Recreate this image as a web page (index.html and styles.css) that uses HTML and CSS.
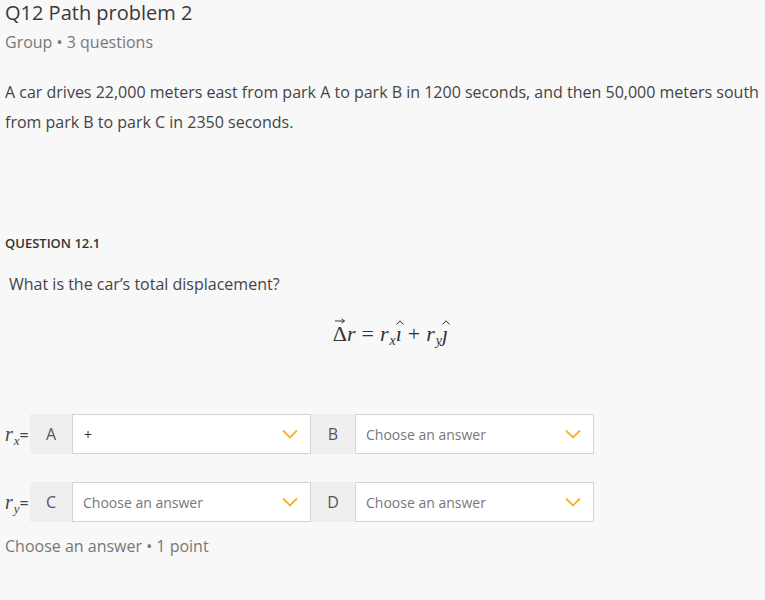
FILE: index.html
```html
<!DOCTYPE html>
<html>
<head>
<meta charset="utf-8">
<link rel="stylesheet" href="styles.css">
</head>
<body>
<div class="page">
  <h1 class="title">Q12 Path problem 2</h1>
  <div class="meta">Group • 3 questions</div>
  <p class="stem">A car drives 22,000 meters east from park A to park B in 1200 seconds, and then 50,000 meters south from park B to park C in 2350 seconds.</p>

  <div class="qlabel">QUESTION 12.1</div>
  <div class="qtext">What is the car’s total displacement?</div>

  <div class="formula">
    <span class="math"><span class="acc"><svg class="arrow" viewBox="0 0 11 6" width="11" height="6"><path d="M0.5 3 H10 M7 0.8 L10 3 L7 5.2" fill="none" stroke="#333" stroke-width="1"/></svg><span class="up">Δ</span></span><i>r</i><span class="op">=</span><i>r</i><sub><i>x</i></sub><span class="acc"><svg class="hat" viewBox="0 0 8 5" width="8" height="5"><path d="M0.5 4.5 L4 0.8 L7.5 4.5" fill="none" stroke="#333" stroke-width="1"/></svg><i>ı</i></span><span class="op">+</span><i>r</i><sub><i>y</i></sub><span class="acc"><svg class="hat" viewBox="0 0 8 5" width="8" height="5"><path d="M0.5 4.5 L4 0.8 L7.5 4.5" fill="none" stroke="#333" stroke-width="1"/></svg><i>ȷ</i></span></span>
  </div>

  <div class="row first">
    <span class="var"><span><i>r</i><sub><i>x</i></sub><span class="eq">=</span></span></span>
    <span class="cell">A</span>
    <div class="select"><span class="val filled">+</span><svg class="chev" viewBox="0 0 16 10" width="16" height="10"><path d="M1 1.5 L8 8.5 L15 1.5" fill="none" stroke="#f7b12a" stroke-width="1.8"/></svg></div>
    <span class="cell">B</span>
    <div class="select"><span class="val">Choose an answer</span><svg class="chev" viewBox="0 0 16 10" width="16" height="10"><path d="M1 1.5 L8 8.5 L15 1.5" fill="none" stroke="#f7b12a" stroke-width="1.8"/></svg></div>
  </div>

  <div class="row">
    <span class="var"><span><i>r</i><sub><i>y</i></sub><span class="eq">=</span></span></span>
    <span class="cell">C</span>
    <div class="select"><span class="val">Choose an answer</span><svg class="chev" viewBox="0 0 16 10" width="16" height="10"><path d="M1 1.5 L8 8.5 L15 1.5" fill="none" stroke="#f7b12a" stroke-width="1.8"/></svg></div>
    <span class="cell">D</span>
    <div class="select"><span class="val">Choose an answer</span><svg class="chev" viewBox="0 0 16 10" width="16" height="10"><path d="M1 1.5 L8 8.5 L15 1.5" fill="none" stroke="#f7b12a" stroke-width="1.8"/></svg></div>
  </div>

  <div class="footer">Choose an answer • 1 point</div>
</div>
</body>
</html>
```
FILE: styles.css
```css
html, body {
  margin: 0;
  padding: 0;
  background: #f8f8f8;
}
body {
  font-family: "Open Sans", "Liberation Sans", sans-serif;
  color: #3f3f3f;
}
.page {
  padding: 0 5px;
}
.title {
  margin: 0;
  font-size: 20px;
  font-weight: 400;
  line-height: 25px;
  color: #3a3a3a;
}
.meta {
  margin-top: 5px;
  font-size: 16px;
  line-height: 24px;
  color: #777;
}
.stem {
  margin: 23px 0 0;
  font-size: 16px;
  line-height: 30px;
  color: #444;
}
.qlabel {
  margin-top: 96px;
  font-size: 13px;
  font-weight: 600;
  line-height: 20px;
  color: #333;
}
.qtext {
  margin-top: 20px;
  padding-left: 4px;
  font-size: 16px;
  line-height: 22px;
  color: #444;
}
.formula {
  margin-top: 26px;
  text-align: center;
  font-family: "Liberation Serif", "DejaVu Serif", serif;
  font-size: 22px;
  line-height: 26px;
  color: #333;
  padding-left: 16px;
}
.formula i {
  font-style: italic;
}
.formula sub {
  font-size: 14px;
  line-height: 0;
  vertical-align: -4px;
  margin-left: 1px;
}
.formula .op {
  margin: 0 6px;
}
.acc {
  position: relative;
  display: inline-block;
}
.acc svg {
  position: absolute;
  left: 50%;
  transform: translateX(-50%);
}
.acc .arrow {
  top: -3px;
}
.acc .hat {
  top: -1px;
  margin-left: 1px;
}
.up {
  font-style: normal;
}
.row {
  display: flex;
  align-items: stretch;
  height: 40px;
  margin-top: 28px;
}
.row.first {
  margin-top: 67px;
}
.var {
  display: flex;
  align-items: center;
  width: 25px;
  font-family: "Liberation Serif", "DejaVu Serif", serif;
  font-size: 20px;
  color: #444;
  white-space: nowrap;
}
.var i {
  font-style: italic;
}
.var sub {
  font-size: 13px;
  line-height: 0;
  vertical-align: -4px;
  margin-left: 1px;
}
.var .eq {
  font-family: "Open Sans", "Liberation Sans", sans-serif;
  font-size: 16px;
}
.cell {
  width: 42px;
  display: flex;
  align-items: center;
  justify-content: center;
  background: #efefef;
  font-size: 16px;
  color: #555;
}
.select {
  width: 239px;
  flex: none;
  box-sizing: border-box;
  border: 1px solid #d4d4d4;
  background: #fff;
  display: flex;
  align-items: center;
  justify-content: space-between;
  padding: 0 10px;
}
.select + .cell {
  width: 44px;
}
.val {
  font-size: 14px;
  color: #777;
}
.val.filled {
  color: #333;
  padding-left: 1px;
}
.chev {
  margin-right: 2px;
}
.footer {
  margin-top: 13px;
  font-size: 16px;
  line-height: 22px;
  color: #777;
}
```
